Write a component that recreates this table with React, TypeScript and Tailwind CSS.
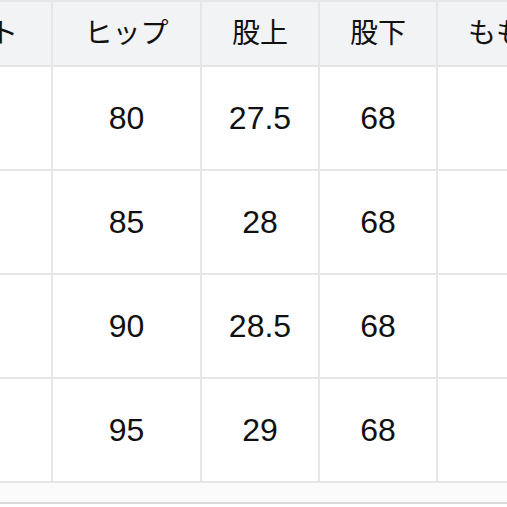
const headers = ['ウエスト', 'ヒップ', '股上', '股下', 'もも周り'];

const rows = [
  ['64', '80', '27.5', '68', '50'],
  ['68', '85', '28', '68', '52'],
  ['72', '90', '28.5', '68', '54'],
  ['76', '95', '29', '68', '56'],
];

// column widths include the 2px right border
const widths = ['w-[180px]', 'w-[149px]', 'w-[118px]', 'w-[118px]', 'w-[174px]'];

export default function App() {
  return (
    <div
      className="w-[507px] h-[507px] overflow-hidden bg-white text-[#111]"
      style={{ fontFamily: '"Liberation Sans", "Noto Sans CJK JP", sans-serif' }}
    >
      <div className="ml-[-127px] w-max border-t-2 border-[#e6e6e8]">
        <div className="flex bg-[#f2f3f5]">
          {headers.map((h, i) => (
            <div
              key={h}
              className={`${widths[i]} h-[65px] shrink-0 flex items-center justify-center border-r-2 border-b-2 border-[#e6e6e8] text-[28px]`}
            >
              {h}
            </div>
          ))}
        </div>
        {rows.map((r, ri) => (
          <div key={ri} className="flex">
            {r.map((v, i) => (
              <div
                key={i}
                className={`${widths[i]} h-[104px] shrink-0 flex items-center justify-center border-r-2 border-b-2 border-[#e6e6e8] text-[32px]`}
              >
                {v}
              </div>
            ))}
          </div>
        ))}
      </div>
      <div className="h-[21px] bg-[#fbfbfb] border-b-2 border-[#d9d9d9]" />
    </div>
  );
}
